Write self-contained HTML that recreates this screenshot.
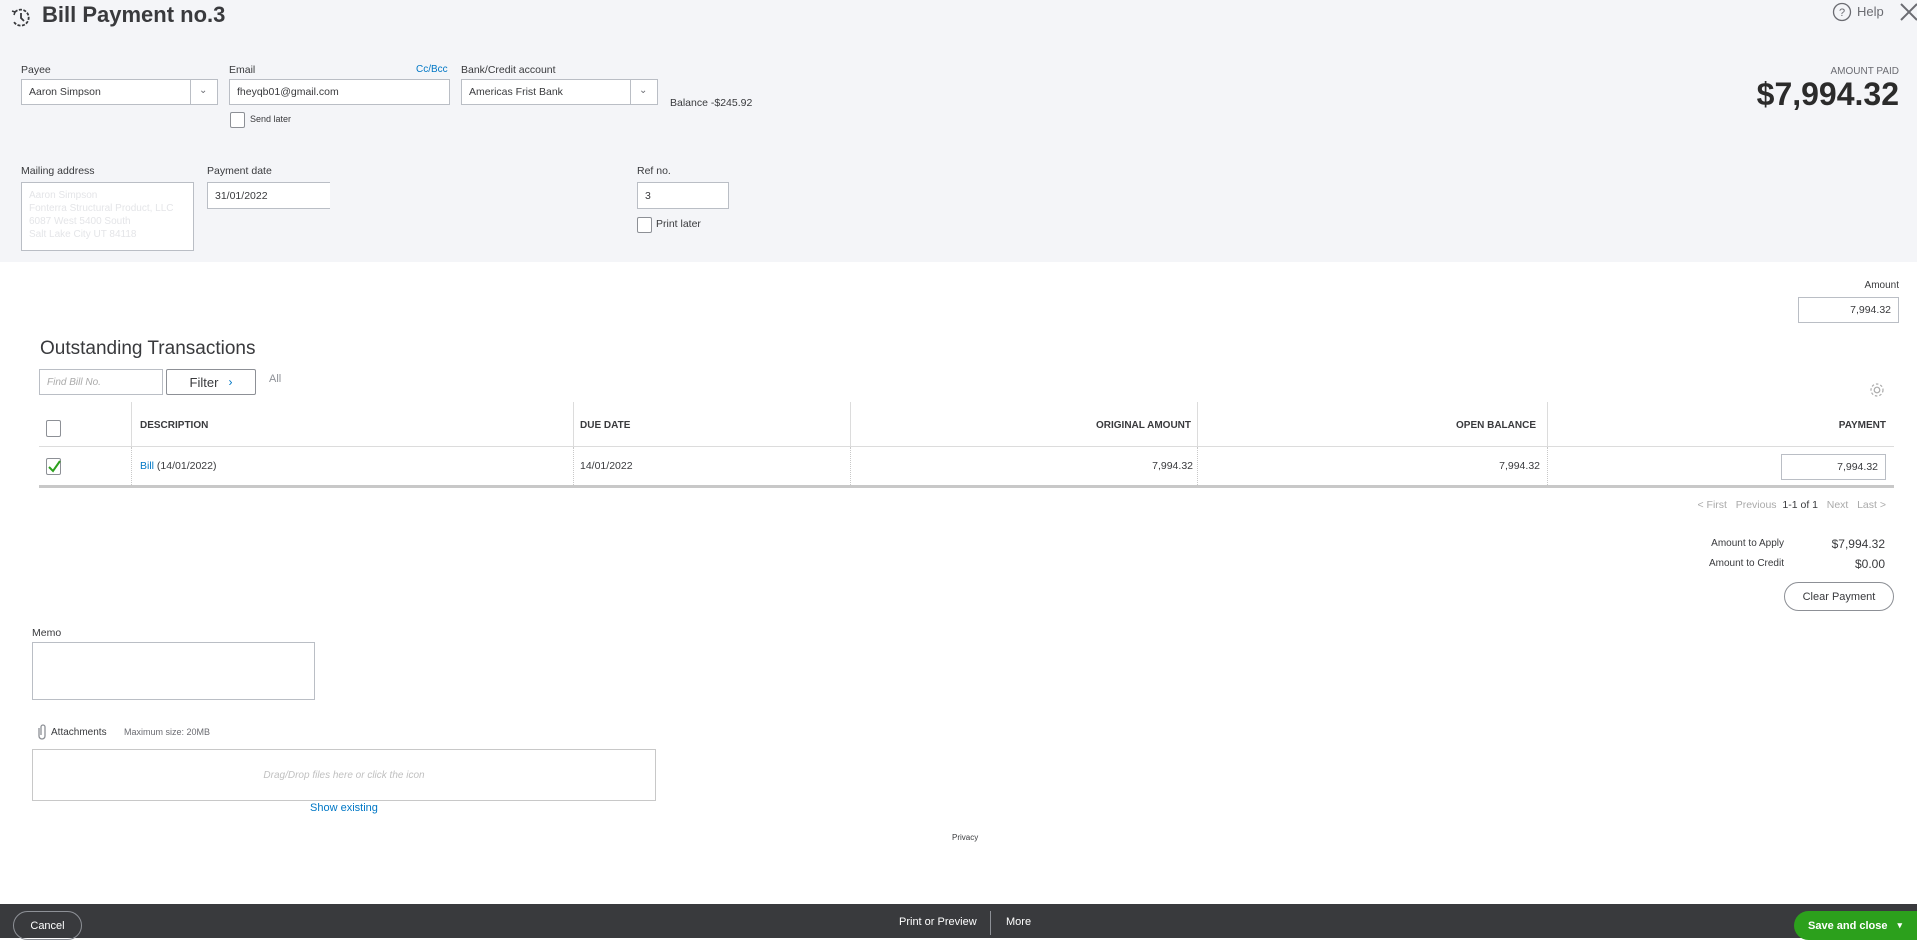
<!DOCTYPE html>
<html><head><meta charset="utf-8"><style>
*{box-sizing:border-box;margin:0;padding:0}
body{width:1917px;height:938px;position:relative;overflow:hidden;background:#fff;font-family:"Liberation Sans",sans-serif;color:#393a3d}
.a{position:absolute}
.hdr{left:0;top:0;width:1917px;height:262px;background:#f4f5f8}
.lbl{font-size:10.5px;color:#393a3d}
.inp{background:#fff;border:1px solid #babec5;font-size:10.5px;padding-left:7px;display:flex;align-items:center}
.chk{background:#fff;border:1px solid #8d9096;border-radius:2px}
.th{font-size:10px;font-weight:bold;color:#393a3d}
.td{font-size:10.5px;color:#393a3d}
.vl{width:1px;background:#dcdcdc}
.vd{width:0;border-left:1px dotted #c8c8c8}
</style></head><body>
<div class="a hdr"></div>
<svg class="a" style="left:10px;top:7px" width="22" height="22" viewBox="0 0 22 22"><path d="M5 5 A8 8 0 1 1 4 15" fill="none" stroke="#393a3d" stroke-width="1.8" stroke-dasharray="3 1.5"/><path d="M11 6v5l3 3" fill="none" stroke="#393a3d" stroke-width="1.8"/><path d="M2 4l3 1-1 3" fill="none" stroke="#393a3d" stroke-width="1.5"/></svg>
<div class="a" style="left:42px;top:2px;font-size:22px;font-weight:bold;color:#393a3d">Bill Payment no.3</div>
<svg class="a" style="left:1832px;top:2px" width="20" height="20"><circle cx="10" cy="10" r="8.5" fill="none" stroke="#6b6c72" stroke-width="1.3"/><text x="10" y="14" font-size="11" text-anchor="middle" fill="#6b6c72" font-family="Liberation Sans">?</text></svg>
<div class="a" style="left:1857px;top:4px;font-size:13px;color:#6b6c72">Help</div>
<svg class="a" style="left:1900px;top:2px" width="17" height="20"><path d="M1 2l16 16M17 2L1 18" stroke="#6b6c72" stroke-width="2"/></svg>

<div class="a lbl" style="left:21px;top:64px">Payee</div>
<div class="a inp" style="left:21px;top:79px;width:197px;height:26px">Aaron Simpson</div>
<div class="a" style="left:190px;top:80px;width:1px;height:24px;background:#babec5"></div>
<div class="a" style="left:199px;top:85px;font-size:10px;color:#6b6c72">&#8964;</div>
<div class="a lbl" style="left:229px;top:64px">Email</div>
<div class="a" style="left:416px;top:64px;font-size:10px;color:#0077c5">Cc/Bcc</div>
<div class="a inp" style="left:229px;top:79px;width:221px;height:26px">fheyqb01@gmail.com</div>
<div class="a chk" style="left:230px;top:112px;width:15px;height:16px"></div>
<div class="a" style="left:250px;top:114px;font-size:9px">Send later</div>
<div class="a lbl" style="left:461px;top:64px">Bank/Credit account</div>
<div class="a inp" style="left:461px;top:79px;width:197px;height:26px">Americas Frist Bank</div>
<div class="a" style="left:630px;top:80px;width:1px;height:24px;background:#babec5"></div>
<div class="a" style="left:639px;top:85px;font-size:10px;color:#6b6c72">&#8964;</div>
<div class="a" style="left:670px;top:97px;font-size:10.5px">Balance -$245.92</div>
<div class="a" style="right:18px;top:66px;font-size:10px;color:#6b6c72">AMOUNT PAID</div>
<div class="a" style="right:18px;top:76px;font-size:32px;font-weight:bold;color:#2b2b2b">$7,994.32</div>

<div class="a lbl" style="left:21px;top:165px">Mailing address</div>
<div class="a" style="left:21px;top:182px;width:173px;height:69px;border:1px solid #babec5;background:#fff;font-size:10px;color:#e4e5e8;padding:6px 0 0 7px;line-height:13px">Aaron Simpson<br>Fonterra Structural Product, LLC<br>6087 West 5400 South<br>Salt Lake City UT 84118</div>
<div class="a lbl" style="left:207px;top:165px">Payment date</div>
<div class="a inp" style="left:207px;top:182px;width:123px;height:27px;border-right:none">31/01/2022</div>
<div class="a lbl" style="left:637px;top:165px">Ref no.</div>
<div class="a inp" style="left:637px;top:182px;width:92px;height:27px">3</div>
<div class="a chk" style="left:637px;top:217px;width:15px;height:16px"></div>
<div class="a" style="left:656px;top:218px;font-size:10.5px">Print later</div>

<div class="a" style="right:18px;top:280px;font-size:10px">Amount</div>
<div class="a inp" style="left:1798px;top:297px;width:101px;height:26px;justify-content:flex-end;padding-right:7px">7,994.32</div>

<div class="a" style="left:40px;top:338px;font-size:19px;color:#393a3d">Outstanding Transactions</div>
<div class="a inp" style="left:39px;top:369px;width:124px;height:26px;font-style:italic;color:#aaa;font-size:10px">Find Bill No.</div>
<div class="a" style="left:166px;top:369px;width:90px;height:26px;border:1px solid #8d9096;border-radius:2px;font-size:13px;display:flex;align-items:center;justify-content:center">Filter <span style="color:#0077c5;margin-left:10px;font-size:12px">&#8250;</span></div>
<div class="a" style="left:269px;top:373px;font-size:11px;color:#8d9096">All</div>
<svg class="a" style="left:1868px;top:381px" width="18" height="18" viewBox="0 0 18 18"><circle cx="9" cy="9" r="2.8" fill="none" stroke="#aaa" stroke-width="1.2"/><circle cx="9" cy="9" r="6" fill="none" stroke="#aaa" stroke-width="1.2" stroke-dasharray="2.5 2"/></svg>

<div class="a" style="left:39px;top:446px;width:1855px;height:1px;background:#dcdcdc"></div>
<div class="a" style="left:39px;top:485px;width:1855px;height:3px;background:#c8c8c8"></div>
<div class="a vl" style="left:131px;top:402px;height:44px"></div>
<div class="a vl" style="left:573px;top:402px;height:44px"></div>
<div class="a vl" style="left:850px;top:402px;height:44px"></div>
<div class="a vl" style="left:1197px;top:402px;height:44px"></div>
<div class="a vl" style="left:1547px;top:402px;height:44px"></div>
<div class="a vd" style="left:131px;top:447px;height:38px"></div>
<div class="a vd" style="left:573px;top:447px;height:38px"></div>
<div class="a vd" style="left:850px;top:447px;height:38px"></div>
<div class="a vd" style="left:1197px;top:447px;height:38px"></div>
<div class="a vd" style="left:1547px;top:447px;height:38px"></div>
<div class="a chk" style="left:46px;top:420px;width:15px;height:17px"></div>
<div class="a th" style="left:140px;top:420px">DESCRIPTION</div>
<div class="a th" style="left:580px;top:420px">DUE DATE</div>
<div class="a th" style="left:1096px;top:420px">ORIGINAL AMOUNT</div>
<div class="a th" style="left:1456px;top:420px">OPEN BALANCE</div>
<div class="a th" style="right:31px;top:420px">PAYMENT</div>
<div class="a chk" style="left:46px;top:458px;width:15px;height:17px"></div>
<svg class="a" style="left:47px;top:459px" width="14" height="15"><path d="M2 8l4 4 7-10" fill="none" stroke="#2ca01c" stroke-width="2"/></svg>
<div class="a td" style="left:140px;top:460px"><span style="color:#0077c5">Bill</span> (14/01/2022)</div>
<div class="a td" style="left:580px;top:460px">14/01/2022</div>
<div class="a td" style="right:724px;top:460px">7,994.32</div>
<div class="a td" style="right:377px;top:460px">7,994.32</div>
<div class="a inp" style="left:1781px;top:454px;width:105px;height:26px;justify-content:flex-end;padding-right:7px">7,994.32</div>

<div class="a" style="right:31px;top:499px;font-size:10.5px;color:#aaa">&lt; First &nbsp; Previous &nbsp;<span style="color:#393a3d">1-1 of 1</span>&nbsp;&nbsp; Next &nbsp; Last &gt;</div>
<div class="a" style="right:133px;top:538px;font-size:10px">Amount to Apply</div>
<div class="a" style="right:32px;top:537px;font-size:12px">$7,994.32</div>
<div class="a" style="right:133px;top:558px;font-size:10px">Amount to Credit</div>
<div class="a" style="right:32px;top:557px;font-size:12px">$0.00</div>
<div class="a" style="left:1784px;top:582px;width:110px;height:29px;border:1px solid #8d9096;border-radius:15px;font-size:11px;display:flex;align-items:center;justify-content:center">Clear Payment</div>

<div class="a" style="left:32px;top:627px;font-size:10.5px">Memo</div>
<div class="a" style="left:32px;top:642px;width:283px;height:58px;border:1px solid #babec5"></div>
<svg class="a" style="left:36px;top:723px" width="12" height="17"><path d="M3 5v8a3 3 0 0 0 6 0V4a2 2 0 0 0-4 0v8" fill="none" stroke="#8d9096" stroke-width="1.3"/></svg>
<div class="a" style="left:51px;top:727px;font-size:10px;color:#393a3d">Attachments</div>
<div class="a" style="left:124px;top:727px;font-size:9px;color:#6b6c72">Maximum size: 20MB</div>
<div class="a" style="left:32px;top:749px;width:624px;height:52px;border:1px solid #c8c8c8;display:flex;align-items:center;justify-content:center;font-size:10px;font-style:italic;color:#c0c0c0">Drag/Drop files here or click the icon</div>
<div class="a" style="left:310px;top:802px;font-size:11px;color:#0077c5">Show existing</div>
<div class="a" style="left:952px;top:833px;font-size:8px">Privacy</div>

<div class="a" style="left:0;top:904px;width:1917px;height:34px;background:#393a3d"></div>
<div class="a" style="left:13px;top:911px;width:69px;height:29px;border:1px solid #8d9096;border-radius:15px;color:#fff;font-size:11px;display:flex;align-items:center;justify-content:center">Cancel</div>
<div class="a" style="left:899px;top:916px;font-size:11px;color:#fff">Print or Preview</div>
<div class="a" style="left:990px;top:911px;width:1px;height:24px;background:#8d9096"></div>
<div class="a" style="left:1006px;top:916px;font-size:11px;color:#fff">More</div>
<div class="a" style="left:1794px;top:911px;width:130px;height:29px;background:#2ca01c;border-radius:15px 0 0 15px;color:#fff;font-size:11px;font-weight:bold;display:flex;align-items:center;padding-left:14px">Save and close <span style="margin-left:10px;font-size:9px">&#9662;</span></div>
</body></html>
